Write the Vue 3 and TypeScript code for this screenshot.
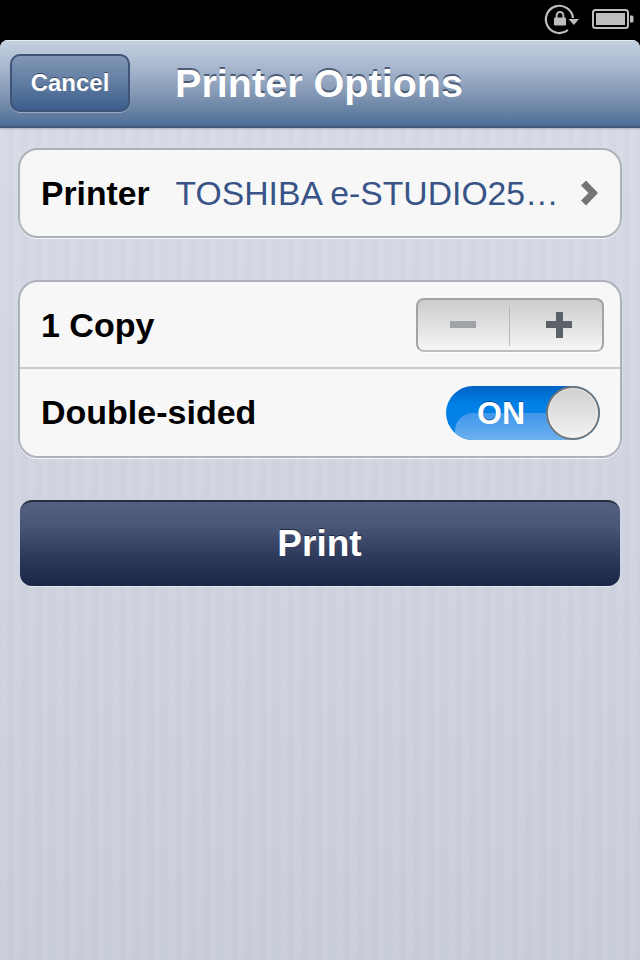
<script setup lang="ts">
import { ref } from 'vue'

const copies = ref(1)
const doubleSided = ref(true)
</script>

<template>
  <div class="screen">
    <div class="status">
      <svg class="lock" width="36" height="34" viewBox="0 0 36 34">
        <path d="M30 16A13.6 13.6 0 1 0 25 28" fill="none" stroke="#bdbdbd" stroke-width="2.2" />
        <path d="M25.5 17h10.5l-5.2 6z" fill="#bdbdbd" />
        <rect x="11" y="15.5" width="12" height="8" rx="1" fill="#bdbdbd" />
        <path d="M13.6 16v-2.6a3.4 3.4 0 0 1 6.8 0V16" fill="none" stroke="#bdbdbd" stroke-width="1.9" />
      </svg>
      <svg class="battery" width="42" height="22" viewBox="0 0 42 22">
        <rect x="1" y="1" width="35" height="18" rx="2.5" fill="none" stroke="#bdbdbd" stroke-width="2" />
        <rect x="4" y="4" width="29" height="12" fill="#bdbdbd" />
        <path d="M38 6.5h2a1.5 1.5 0 0 1 1.5 1.5v4A1.5 1.5 0 0 1 40 13.5h-2z" fill="#bdbdbd" />
      </svg>
    </div>

    <div class="page">
      <header class="nav">
        <button type="button" class="cancel">Cancel</button>
        <h1 class="title">Printer Options</h1>
      </header>

      <main class="content">
        <section class="group">
          <div class="row printer-row">
            <span class="label">Printer</span>
            <span class="value">TOSHIBA e-STUDIO25…</span>
            <svg class="chevron" width="20" height="28" viewBox="0 0 20 28">
              <path d="M5 1.500 17 14 5 26.500 0 21.500 7.500 14 0 6.500z" fill="#757575" />
            </svg>
          </div>
        </section>

        <section class="group">
          <div class="row stepper-row">
            <span class="label">{{ copies }} Copy</span>
            <div class="stepper">
              <button type="button" class="step minus" aria-label="Fewer copies"><i class="bar" /></button>
              <button type="button" class="step plus" aria-label="More copies"><i class="bar" /><i class="bar vert" /></button>
            </div>
          </div>
          <div class="row toggle-row">
            <span class="label">Double-sided</span>
            <div class="toggle" :class="{ on: doubleSided }">
              <span class="gloss" />
              <span class="on-text">ON</span>
              <span class="knob" />
            </div>
          </div>
        </section>

        <button type="button" class="print">Print</button>
      </main>
    </div>
  </div>
</template>

<style>
html, body {
  margin: 0;
  background: #000;
}
</style>

<style scoped>
.screen {
  width: 640px;
  height: 960px;
  display: flex;
  flex-direction: column;
  background: #000;
  overflow: hidden;
  font-family: "Liberation Sans", Arial, sans-serif;
}
.status {
  height: 40px;
  flex-shrink: 0;
  display: flex;
  justify-content: flex-end;
  align-items: center;
  gap: 13px;
  padding-right: 6px;
}
.lock {
  display: block;
  margin-top: -2px;
}
.battery {
  display: block;
}
.page {
  flex: 1;
  display: flex;
  flex-direction: column;
  border-radius: 8px 8px 0 0;
  overflow: hidden;
  background-color: #cfd3de;
  background-image:
    repeating-linear-gradient(90deg, rgba(255, 255, 255, 0.035) 0 7px, rgba(120, 130, 155, 0.025) 7px 14px),
    linear-gradient(180deg, #d8dce6 0%, #c8cdd9 100%);
}
.nav {
  height: 88px;
  box-sizing: border-box;
  flex-shrink: 0;
  display: flex;
  align-items: center;
  gap: 45px;
  padding: 0 10px 1px;
  background: linear-gradient(180deg, #c4d0e0 0%, #a9b8cf 30%, #7f95b2 65%, #4e6d96 100%);
  border-top: 1px solid #e6ecf3;
  border-bottom: 2px solid #43597a;
  box-shadow: 0 1px 2px rgba(60, 70, 95, 0.3);
  position: relative;
}
.cancel {
  width: 120px;
  height: 58px;
  padding: 0 0 1px;
  box-sizing: border-box;
  border: 2px solid #3e5478;
  border-radius: 10px;
  background: linear-gradient(180deg, #8197b5 0%, #5f7ca1 50%, #3c5d8b 100%);
  box-shadow: 0 1px 0 rgba(255, 255, 255, 0.35);
  color: #fff;
  font: bold 24px "Liberation Sans", Arial, sans-serif;
  text-shadow: 0 -1px 0 rgba(30, 45, 70, 0.7);
}
.title {
  margin: 1px 0 0;
  color: #fff;
  font-size: 39.6px;
  font-weight: 700;
  text-shadow: 0 -2px 0 rgba(50, 65, 90, 0.75);
}
.content {
  display: flex;
  flex-direction: column;
  padding: 20px 18px 0;
}
.group {
  box-sizing: border-box;
  background: #f7f7f7;
  border: 2px solid #adb1ba;
  border-radius: 20px;
  box-shadow: 0 1px 0 rgba(255, 255, 255, 0.8);
  margin-bottom: 42px;
}
.row {
  display: flex;
  align-items: center;
  padding: 0 21px;
  box-sizing: border-box;
}
.printer-row {
  height: 86px;
  padding-right: 19px;
}
.stepper-row {
  height: 87px;
  justify-content: space-between;
  padding-right: 16px;
  border-bottom: 2px solid #c8c8c8;
}
.stepper-row .label {
  padding-top: 1px;
}
.toggle-row {
  height: 87px;
  justify-content: space-between;
  padding-right: 20px;
}
.label {
  color: #000;
  font-size: 34px;
  font-weight: 700;
  white-space: nowrap;
}
.printer-row .label {
  font-size: 33.7px;
}
.value {
  margin-left: 26px;
  color: #385487;
  font-size: 33.7px;
  white-space: nowrap;
  flex: 1;
}
.chevron {
  display: block;
}
.stepper {
  width: 188px;
  height: 54px;
  box-sizing: border-box;
  display: flex;
  border: 2px solid #a3a3a3;
  border-bottom-color: #bcbcbc;
  border-radius: 8px;
  overflow: hidden;
  background: linear-gradient(180deg, #cdcdcd 0%, #e0e0e0 50%, #f6f6f6 100%);
  box-shadow: 0 1px 0 #fff;
}
.step {
  flex: none;
  width: 50%;
  box-sizing: border-box;
  padding: 0;
  border: 0;
  background: transparent;
  position: relative;
  display: flex;
  align-items: center;
  justify-content: center;
}
.minus {
  padding-right: 2px;
}
.plus {
  padding-left: 6px;
}
.minus::after {
  content: "";
  position: absolute;
  right: 0;
  top: 6px;
  bottom: 4px;
  width: 1px;
  background: #b8b8b8;
}
.bar {
  display: block;
  width: 26px;
  height: 7px;
  background: #a0a3a8;
}
.plus .bar {
  background: #5c6068;
  position: absolute;
}
.plus .vert {
  width: 7px;
  height: 26px;
}
.toggle {
  width: 154px;
  height: 54px;
  position: relative;
  border-radius: 27px;
  overflow: hidden;
  background: linear-gradient(180deg, #0063c4 0%, #0080e6 35%, #0a82e6 100%);
}
.gloss {
  position: absolute;
  left: 9px;
  top: 27px;
  width: 120px;
  height: 30px;
  border-radius: 18px 0 0 0;
  background: linear-gradient(180deg, #3d97ea 0%, #74b3ee 100%);
}
.on-text {
  position: absolute;
  left: 31px;
  top: 0;
  line-height: 54px;
  color: #fff;
  font-size: 32px;
  font-weight: 700;
  text-shadow: 0 -1px 0 rgba(0, 50, 120, 0.6);
}
.knob {
  position: absolute;
  right: 0;
  top: 0;
  width: 54px;
  height: 54px;
  box-sizing: border-box;
  border: 2px solid #777;
  border-radius: 50%;
  background: linear-gradient(180deg, #d0d0d0 0%, #f2f2f2 100%);
  box-shadow: inset 0 0 0 1px rgba(255, 255, 255, 0.6);
}
.print {
  height: 86px;
  margin: 0 2px;
  padding: 0 1px 0 0;
  box-sizing: border-box;
  border: 0;
  border-top: 2px solid #262c40;
  border-radius: 12px;
  background: linear-gradient(180deg, #566181 0%, #4a5678 28%, #2d3a5c 65%, #1a2747 100%);
  box-shadow: 0 1px 0 rgba(255, 255, 255, 0.5);
  color: #fff;
  font: bold 37px "Liberation Sans", Arial, sans-serif;
  text-shadow: 0 -1px 0 rgba(10, 20, 40, 0.7);
}
</style>
